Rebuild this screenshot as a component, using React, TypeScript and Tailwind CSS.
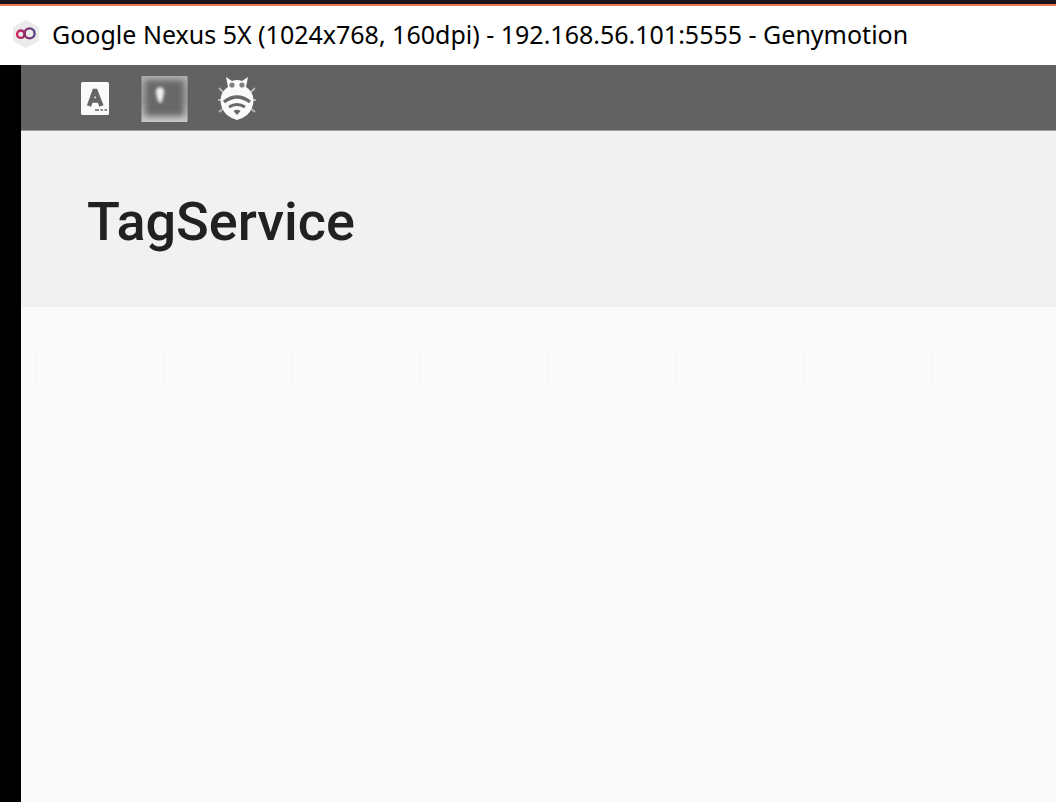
const TICKS = [0, 1, 2, 3, 4, 5, 6, 7]

// ── Icons ──

function GenymotionLogo() {
  return (
    <svg viewBox="0 0 28 30" className="h-[30px] w-7 shrink-0" aria-hidden="true">
      <defs>
        <linearGradient id="loop" gradientUnits="userSpaceOnUse" x1="4" y1="0" x2="24" y2="0">
          <stop offset="0" stopColor="#d92a5c" />
          <stop offset="0.45" stopColor="#8b2a66" />
          <stop offset="1" stopColor="#4c4a8c" />
        </linearGradient>
      </defs>
      <path d="M14 1 L27 8 V22 L14 29 L1 22 V8 Z" fill="#ebebeb" />
      <g fill="none" stroke="url(#loop)" strokeWidth="2.4">
        <circle cx="8.8" cy="15.2" r="3.7" />
        <circle cx="17.6" cy="14.4" r="5" />
      </g>
    </svg>
  )
}

function KeyboardIcon() {
  return (
    <svg viewBox="0 0 28 34" className="h-[34px] w-7" aria-hidden="true">
      <rect width="28" height="33" rx="1.5" fill="#fafafa" />
      <path
        d="M8 24 L13.4 9 H14.6 L20.5 24 M10 18.5 H18"
        fill="none"
        stroke="#666666"
        strokeWidth="4.4"
      />
      <path d="M14 28 H18 M19.5 28 H22 M23.5 28 H26" stroke="#888888" strokeWidth="2" />
    </svg>
  )
}

function GlassIcon() {
  return (
    <svg viewBox="0 0 48 48" className="size-12" aria-hidden="true">
      <defs>
        <filter id="soft" x="-30%" y="-30%" width="160%" height="160%">
          <feGaussianBlur stdDeviation="3" />
        </filter>
        <filter id="glint" x="-60%" y="-60%" width="220%" height="220%">
          <feGaussianBlur stdDeviation="1.8" />
        </filter>
        <linearGradient id="edge" x1="0" y1="0" x2="0" y2="1">
          <stop offset="0" stopColor="#b4b4b4" />
          <stop offset="0.5" stopColor="#a4a4a4" />
          <stop offset="1" stopColor="#cccccc" />
        </linearGradient>
        <clipPath id="pane">
          <rect x="0.5" y="1" width="46" height="46" />
        </clipPath>
      </defs>
      <g clipPath="url(#pane)">
        <rect width="48" height="48" fill="url(#edge)" />
        <rect x="4" y="5" width="39" height="36" fill="#686868" filter="url(#soft)" />
        <path
          d="M15 16 C15 11 23 11 23 16 C23 20 21 28 19.5 28 C17 28 15 20 15 16 Z"
          fill="#f0f0f0"
          filter="url(#glint)"
        />
      </g>
    </svg>
  )
}

function BugIcon() {
  return (
    <svg viewBox="0 0 42 46" className="h-[46px] w-[42px]" aria-hidden="true">
      <g fill="none" stroke="#b4b4b4" strokeWidth="2">
        <path d="M6 16 L2 12 M5 24 H1 M7 32 L2 36 M34 16 L38 12 M35 24 H39 M33 32 L38 36" />
      </g>
      <path
        d="M11 11 L9 1 L15 5 Q20 3 25 5 L31 1 L29 11 Q36 15 36.5 24 Q36.5 33 30 39 Q25 43 20 44 Q15 43 10 39 Q3.5 33 3.5 24 Q4 15 11 11 Z"
        fill="#fafafa"
      />
      <circle cx="15" cy="9" r="2.6" fill="#808080" />
      <circle cx="25" cy="9" r="2.6" fill="#808080" />
      <g fill="none" stroke="#686868" strokeWidth="3.4">
        <path d="M7 26 Q20 16 33 26" />
        <path d="M12 31 Q20 26 28 31" strokeWidth="3" />
      </g>
      <path d="M16.5 35 Q20 32.5 23.5 35 L20 39 Z" fill="#686868" />
    </svg>
  )
}

// ── Window ──

function TitleBar() {
  return (
    <div className="border-t-4 border-[#19151a] bg-white">
      <div className="flex h-[61px] items-center gap-3 border-t-2 border-[#ee7b58] pr-4 pb-1 pl-3">
        <GenymotionLogo />
        <span className="font-['Noto_Sans',sans-serif] text-[25px] leading-9 whitespace-nowrap text-black">
          Google Nexus 5X (1024x768, 160dpi) - 192.168.56.101:5555 - Genymotion
        </span>
      </div>
    </div>
  )
}

function StatusBar() {
  return (
    <div className="flex h-[66px] items-center border-b border-[#a0a0a0] bg-[#626262] pt-0.5 pl-[60px]">
      <KeyboardIcon />
      <div className="ml-8">
        <GlassIcon />
      </div>
      <div className="ml-7">
        <BugIcon />
      </div>
    </div>
  )
}

export default function App() {
  return (
    <div className="flex min-h-screen flex-col overflow-hidden">
      <TitleBar />
      <div className="flex flex-1 flex-col border-l-[21px] border-black bg-[#fafafa]">
        <StatusBar />
        <header className="flex h-44 items-center bg-[#f1f1f1] pt-1.5 pl-[66px]">
          <h1 className="font-[Roboto,sans-serif] text-[54px] leading-[64px] font-medium text-[#212121]">
            TagService
          </h1>
        </header>
        <main className="flex-1 pt-12 pl-3.5">
          <div className="flex">
            {TICKS.map((tick) => (
              <div key={tick} className="h-8 w-32 shrink-0 border-l-2 border-[#f6f6f6]" />
            ))}
          </div>
        </main>
      </div>
    </div>
  )
}
